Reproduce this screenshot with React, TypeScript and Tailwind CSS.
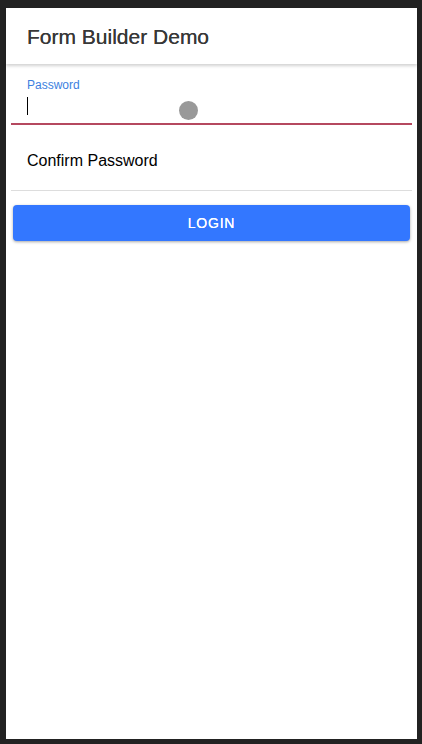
export default function App() {
  return (
    <div className="h-[744px] w-[422px] bg-[#222222] pt-2 pl-[6px] pr-[5px] pb-[5px]" style={{ fontFamily: '"Liberation Sans", Arial, sans-serif' }}>
      <div className="flex h-full flex-col bg-white">
        <header className="relative z-10 flex h-[56px] items-center pl-[21px] shadow-[0_2px_3px_rgba(0,0,0,0.18)]">
          <h1 className="text-[21px] leading-none text-[#383838] [text-shadow:0_0_0.4px_#383838]">Form Builder Demo</h1>
        </header>
        <div className="px-[5px]">
          <div className="relative h-[61px] border-b-2 border-[#b5485f]">
            <div className="pl-4 pt-[15px] text-[12px] leading-none text-[#3d7fe0]">Password</div>
            <div className="ml-4 mt-[6px] h-[18px] w-px bg-black" />
            <div className="absolute left-[168px] top-[37px] h-[19px] w-[19px] rounded-full bg-[#999999]" />
          </div>
          <div className="flex h-[66px] items-center border-b border-[#dddddd] pl-4 pt-[6px]">
            <span className="text-[16px] text-black">Confirm Password</span>
          </div>
          <button className="mx-[2px] mt-[14px] flex h-[36px] w-[calc(100%-4px)] items-center justify-center rounded-[4px] bg-[#3377ff] text-[14px] font-normal tracking-[0.8px] text-white shadow-[0_1px_3px_rgba(0,0,0,0.35)] [text-shadow:0_0_0.4px_#ffffff]">
            LOGIN
          </button>
        </div>
      </div>
    </div>
  );
}
